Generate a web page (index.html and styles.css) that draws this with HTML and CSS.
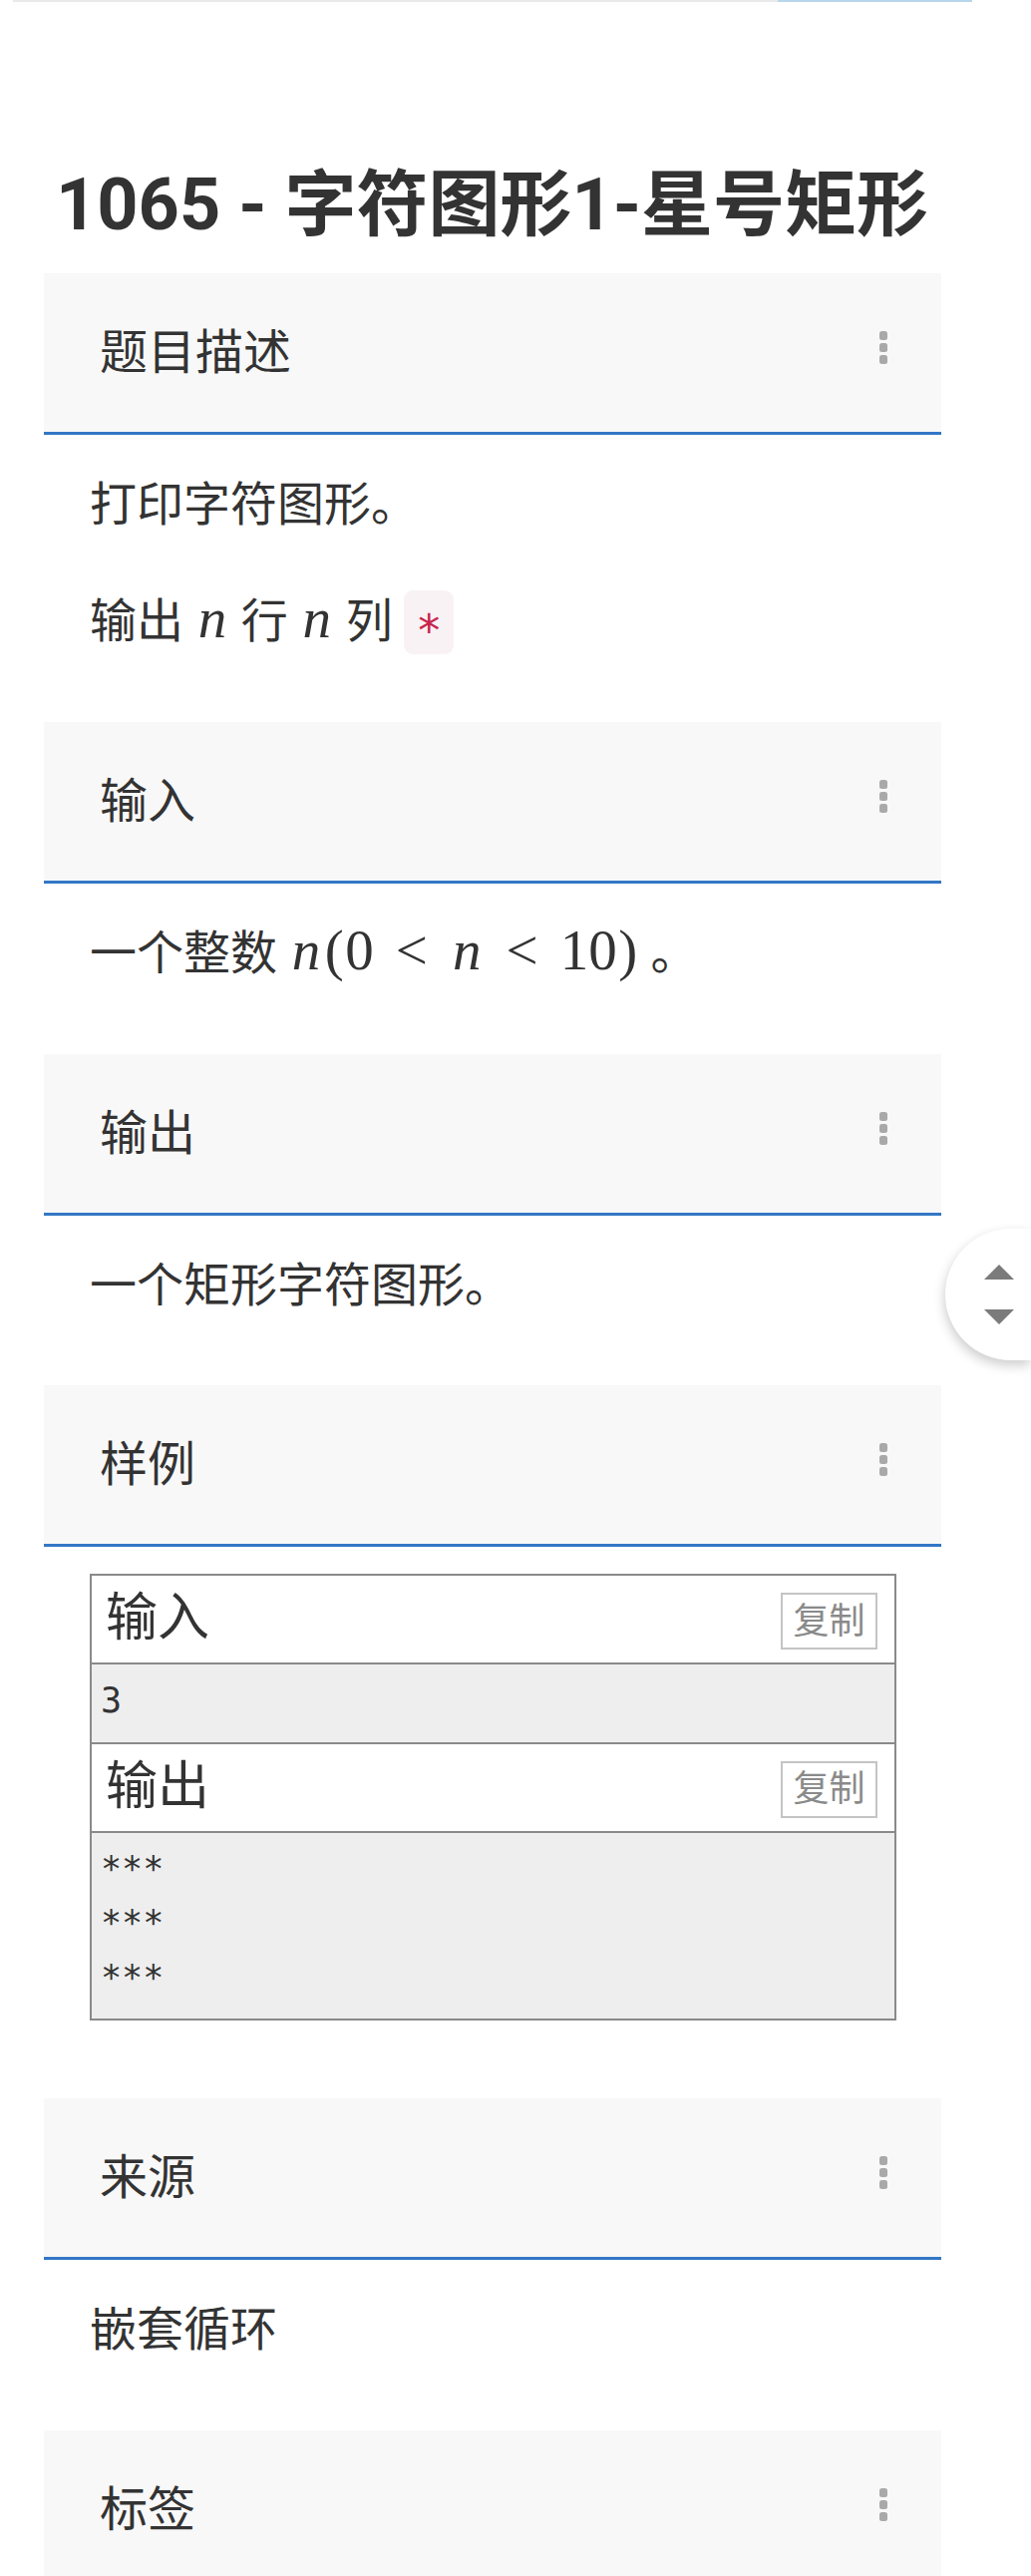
FILE: index.html
```html
<!DOCTYPE html>
<html lang="zh-CN">
<head>
<meta charset="utf-8">
<title>1065 - 字符图形1-星号矩形</title>
<link rel="stylesheet" href="styles.css">
</head>
<body>
<div class="topbar"><span class="topbar-gray"></span><span class="topbar-blue"></span></div>
<main class="problem">
  <h1 class="title">1065 - 字符图形1-星号矩形</h1>

  <section class="panel">
    <div class="panel-head">
      <h2>题目描述</h2>
      <svg class="kebab" width="8" height="33" viewBox="0 0 8 33"><rect x="0" y="0" width="8" height="9" rx="2.5"/><rect x="0" y="12" width="8" height="9" rx="2.5"/><rect x="0" y="24" width="8" height="9" rx="2.5"/></svg>
    </div>
    <div class="panel-body">
      <p>打印字符图形。</p>
      <p>输出 <span class="katex"><span class="mi">n</span></span> 行 <span class="katex"><span class="mi">n</span></span> 列 <code>*</code></p>
    </div>
  </section>

  <section class="panel">
    <div class="panel-head">
      <h2>输入</h2>
      <svg class="kebab" width="8" height="33" viewBox="0 0 8 33"><rect x="0" y="0" width="8" height="9" rx="2.5"/><rect x="0" y="12" width="8" height="9" rx="2.5"/><rect x="0" y="24" width="8" height="9" rx="2.5"/></svg>
    </div>
    <div class="panel-body">
      <p>一个整数 <span class="katex"><span class="mi">n</span><span class="mp">(</span><span class="mn">0</span><span class="rel">&lt;</span><span class="mi">n</span><span class="rel">&lt;</span><span class="mn">10</span><span class="mp">)</span></span> 。</p>
    </div>
  </section>

  <section class="panel">
    <div class="panel-head">
      <h2>输出</h2>
      <svg class="kebab" width="8" height="33" viewBox="0 0 8 33"><rect x="0" y="0" width="8" height="9" rx="2.5"/><rect x="0" y="12" width="8" height="9" rx="2.5"/><rect x="0" y="24" width="8" height="9" rx="2.5"/></svg>
    </div>
    <div class="panel-body panel-body-tight">
      <p>一个矩形字符图形。</p>
    </div>
  </section>

  <section class="panel">
    <div class="panel-head">
      <h2>样例</h2>
      <svg class="kebab" width="8" height="33" viewBox="0 0 8 33"><rect x="0" y="0" width="8" height="9" rx="2.5"/><rect x="0" y="12" width="8" height="9" rx="2.5"/><rect x="0" y="24" width="8" height="9" rx="2.5"/></svg>
    </div>
    <div class="panel-body panel-body-sample">
      <div class="sample">
        <div class="sample-head"><h4>输入</h4><button class="copy" type="button">复制</button></div>
        <pre class="sample-data">3</pre>
        <div class="sample-head"><h4>输出</h4><button class="copy" type="button">复制</button></div>
        <pre class="sample-data">***
***
***</pre>
      </div>
    </div>
  </section>

  <section class="panel">
    <div class="panel-head">
      <h2>来源</h2>
      <svg class="kebab" width="8" height="33" viewBox="0 0 8 33"><rect x="0" y="0" width="8" height="9" rx="2.5"/><rect x="0" y="12" width="8" height="9" rx="2.5"/><rect x="0" y="24" width="8" height="9" rx="2.5"/></svg>
    </div>
    <div class="panel-body">
      <p>嵌套循环</p>
    </div>
  </section>

  <section class="panel">
    <div class="panel-head">
      <h2>标签</h2>
      <svg class="kebab" width="8" height="33" viewBox="0 0 8 33"><rect x="0" y="0" width="8" height="9" rx="2.5"/><rect x="0" y="12" width="8" height="9" rx="2.5"/><rect x="0" y="24" width="8" height="9" rx="2.5"/></svg>
    </div>
  </section>
</main>

<div class="float-nav" aria-label="滚动">
  <span class="tri tri-up"></span>
  <span class="tri tri-down"></span>
</div>
</body>
</html>
```

FILE: styles.css
```css
* {
  box-sizing: border-box;
}

html, body {
  margin: 0;
  padding: 0;
  background: #ffffff;
}

body {
  font-family: "Roboto", "Noto Sans CJK SC", sans-serif;
  font-size: 47px;
  color: #333333;
  position: relative;
}

.topbar {
  display: flex;
  height: 2px;
  padding-left: 13px;
}

.topbar-gray {
  width: 767px;
  background: #e9e9e9;
}

.topbar-blue {
  width: 195px;
  background: #b9d7ec;
}

.problem {
  margin-left: 44px;
  width: 900px;
}

.title {
  margin: 163px 0 27px;
  padding-left: 12px;
  font-family: "Roboto", "Noto Sans CJK SC", sans-serif;
  font-weight: 700;
  font-size: 72px;
  line-height: 82px;
  color: #333333;
  white-space: nowrap;
}

.panel-head {
  height: 162px;
  display: flex;
  align-items: center;
  justify-content: space-between;
  padding: 0 54px 0 56px;
  background: #f8f8f8;
  border-bottom: 3px solid #3377c6;
}

.panel-head h2 {
  margin: 0;
  font-size: 48px;
  font-weight: 400;
  line-height: 1.2;
  color: #333333;
}

.kebab {
  display: block;
  fill: #a9a9a9;
  margin-bottom: 11px;
}

.panel-body {
  padding: 37px 45px 68px 46px;
}

.panel-body-tight {
  padding-bottom: 67px;
}

.panel-body p {
  margin: 0 0 51px;
  line-height: 66px;
  white-space: nowrap;
}

.panel-body p:last-child {
  margin-bottom: 0;
}

.katex {
  font-family: "Liberation Serif", "Times New Roman", serif;
  font-size: 57px;
  line-height: 1;
}

.mi {
  font-style: italic;
  padding: 0 3px;
}

.mp {
  padding: 0 1.6px;
}

.rel {
  margin: 0 22px;
}

code {
  display: inline-block;
  vertical-align: top;
  margin-top: 2px;
  height: 64px;
  width: 50px;
  padding: 18px 0 0;
  text-align: center;
  font-family: "DejaVu Sans Mono", "Liberation Mono", monospace;
  font-size: 44px;
  line-height: 46px;
  color: #c7254e;
  background: #f9f2f4;
  border-radius: 9px;
}

.panel-body-sample {
  padding: 27px 45px 78px 46px;
}

.sample {
  border: 2px solid #8a8a8a;
}

.sample-head {
  height: 89px;
  display: flex;
  align-items: center;
  justify-content: space-between;
  padding: 0 17px 0 14px;
  background: #ffffff;
  border-bottom: 2px solid #8a8a8a;
}

.sample-head h4 {
  margin: 0;
  font-size: 52px;
  font-weight: 400;
  line-height: 1.2;
  color: #333333;
}

.copy {
  width: 97px;
  height: 57px;
  padding: 0;
  margin-top: 4px;
  background: #ffffff;
  border: 2px solid #c4c4c4;
  border-radius: 0;
  color: #8a8a8a;
  font-family: "Roboto", "Noto Sans CJK SC", sans-serif;
  font-size: 36px;
  line-height: 1;
}

.sample-data {
  margin: 0;
  padding: 9px 9px 14px;
  background: #eeeeee;
  font-family: "DejaVu Sans Mono", "Liberation Mono", monospace;
  font-size: 35px;
  line-height: 54.5px;
  color: #333333;
  border-bottom: 2px solid #8a8a8a;
}

.sample-data:last-child {
  border-bottom: 0;
}

.float-nav {
  position: absolute;
  top: 1232px;
  left: 948px;
  width: 86px;
  height: 132px;
  border-radius: 66px 0 0 66px;
  background: #ffffff;
  box-shadow: -1px 5px 12px rgba(0, 0, 0, 0.2);
  display: flex;
  flex-direction: column;
  justify-content: center;
  gap: 30px;
  padding-left: 39px;
}

.tri {
  display: block;
  width: 0;
  height: 0;
  border-left: 15px solid transparent;
  border-right: 15px solid transparent;
}

.tri-up {
  border-bottom: 15px solid #7b7b7b;
}

.tri-down {
  border-top: 15px solid #7b7b7b;
}
```
